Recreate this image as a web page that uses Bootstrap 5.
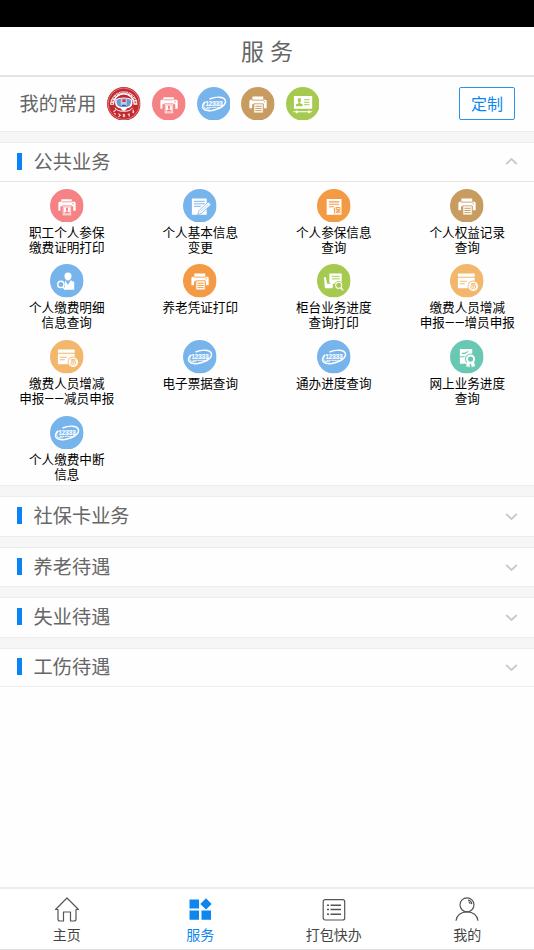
<!DOCTYPE html>
<html lang="zh-CN">
<head>
<meta charset="utf-8">
<meta name="viewport" content="width=device-width, initial-scale=1">
<title>服务</title>
<link href="https://cdn.jsdelivr.net/npm/bootstrap@5.3.0/dist/css/bootstrap.min.css" rel="stylesheet">
<style>
html, body { height: 100%; }
body { font-family: "Noto Sans CJK SC", "Liberation Sans", sans-serif; background: #fefefe; color: #666; overflow: hidden; }
.status-strip { height: 26.5px; background: #000; }
.title-bar { height: 50.5px; border-bottom: 2px solid #e4e4e4; font-size: 23px; line-height: 1; background: #fff; word-spacing: 1px; }
.favourites { height: 54px; padding: 0 19px 1px 19.6px; }
.favourites .caption, .sec-title { font-size: 19.2px; line-height: 1; }
.disc { width: 33.6px; height: 33.6px; display: block; flex: none; }
.fav-icons { gap: 11px; margin-left: 11px; }
.customise { width: 56px; height: 33px; font-size: 16px; line-height: 1; color: #0d86ee; border: 1.3px solid #2b93ee; border-radius: 2px; padding: 0 0 1px; background: #fff; }
.divider { height: 12px; background: #f6f6f6; border-top: 1px solid #ededed; border-bottom: 1px solid #ececec; }
.sec-head { height: 38.5px; padding: 0 16px 1px 17px; }
.sec-head .tick { width: 5px; height: 17px; background: #0a84f5; margin-right: 11.6px; }
.sec-last { border-bottom: 1px solid #efefef; }
.chev { width: 13px; height: 9px; fill: none; stroke: #c9c9c9; stroke-width: 1.8; }
.services { height: 303.8px; margin-top: -.3px; padding-top: 6.6px; border-top: 1px solid #e6e6e6; row-gap: 0; align-content: flex-start; }
.service { height: 75.7px; color: #000; font-size: 12.6px; line-height: 15px; text-align: center; white-space: nowrap; }
.service .disc { margin: 0 auto 1.4px; }
.dash { font-family: Roboto, sans-serif; }
.tabs { height: 63px; border-top: 2px solid #ececec; border-bottom: 1px solid #e0e0e0; background: #fff; font-size: 14px; line-height: 16px; color: #444; }
.tabs a { color: inherit; padding-top: 6px; }
.tabs a.current { color: #0d86ee; }
.tabs svg { width: 28px; height: 28px; margin-bottom: 3px; fill: none; stroke: #555; stroke-width: 1.2; }
</style>
<script src="https://cdn.jsdelivr.net/npm/bootstrap@5.3.0/dist/js/bootstrap.bundle.min.js"></script>
</head>
<body class="d-flex flex-column">
<svg class="d-none">
  <symbol id="i-badge" viewBox="0 0 34 34"><circle cx="17" cy="17" r="17" fill="#f58284"/>
    <path fill="#fff" d="M11.500 10.500h10.500v2.500h3l1 1v8h-2.500v-4.500H10.500V22H8.500v-8l1-1h2z"/>
    <path stroke="#f58284" stroke-width=".8" d="M12 13h10"/><path fill="#f58284" d="M22.500 14.500h1.500v1h-1.500z"/>
    <path fill="#fff" stroke="#f58284" stroke-width=".8" d="M12.500 17h9.200v10h-9.200z"/><path fill="none" stroke="#f58284" stroke-width=".5" d="M13.700 18.300h6.800v7.300h-6.800z"/>
    <path fill="#f58284" d="M16.200 19h2v2.200l-.5 1v.8l2 .6v1.200h-5v-1.200l2-.6v-.8l-.5-1z"/></symbol>
  <symbol id="doc-printer" viewBox="0 0 34 34">
    <path fill="#fff" d="M11.500 9.500h11V13h2.500l1 1v7.500h-3V17.500H11.200v4H8.500V14l1-1h2z"/>
    <path fill="none" stroke="currentColor" stroke-width=".9" d="M11 13.300h12"/><path fill="currentColor" d="M23 14.500h1.300v1H23z"/>
    <path fill="#fff" stroke="currentColor" stroke-width=".9" d="M13 17h9.500v9.300H13z"/><path stroke="currentColor" stroke-width="1" d="M14.500 19.500h6.500M14.500 21.700h6.500M14.500 23.900h6.500"/></symbol>
  <symbol id="i-print-tan" viewBox="0 0 34 34"><circle cx="17" cy="17" r="17" fill="#c89c60"/><use href="#doc-printer" width="34" height="34" color="#c89c60"/></symbol>
  <symbol id="i-print-orange" viewBox="0 0 34 34"><circle cx="17" cy="17" r="17" fill="#f59a44"/><use href="#doc-printer" width="34" height="34" color="#f59a44"/></symbol>
  <symbol id="i-12333" viewBox="0 0 34 34"><circle cx="17" cy="17" r="17" fill="#78b4ec"/>
    <g fill="none" stroke="#fff" transform="rotate(-9 17 17)"><path stroke-width="1.500" d="M8.500 13.500C2.500 18 5 23.300 14 23.300c9 0 16-3.500 15-8.300-.8-4-9-5-15.500-3.500"/><path stroke-width=".8" d="M9.500 13.700c-4.500 3-4 7 3 7.800"/></g>
    <text x="8.500" y="18.900" font-family="Liberation Sans, sans-serif" font-weight="bold" font-size="7.400" fill="#fff" stroke="#fff" stroke-width=".2" textLength="17.500" lengthAdjust="spacingAndGlyphs">12333</text>
    <path stroke="#fff" stroke-width="1" stroke-dasharray="2 .5" d="M10 20.600h13"/></symbol>
  <symbol id="i-card" viewBox="0 0 34 34"><circle cx="17" cy="17" r="17" fill="#a6ca50"/>
    <path fill="#fff" d="M8 9h18.500v13H8zM7.500 24.500h19v1h-19zM10 23.700h1.800v2.800H10zM22.500 23.700h1.800v2.800h-1.800z"/>
    <path fill="#a6ca50" d="M12 11.500h3v3l-.8 1.200v.8l2.600 1v2H10.200v-2l2.600-1v-.8l-.8-1.200zM18.300 12.500h5.500v1h-5.500zM18.300 15h5.500v1h-5.500zM18.300 17.500h5.500v1h-5.500z"/></symbol>
  <symbol id="i-seal" viewBox="0 0 34 34"><circle cx="17" cy="17" r="17" fill="#c4282f"/>
    <circle cx="17" cy="17" r="15.900" fill="none" stroke="#f3d2d2" stroke-width=".5"/>
    <path fill="#fff" d="M3.200 18A13.800 13.800 0 0 1 30.800 18L27 18A10 10 0 0 0 7 18z"/>
    <path fill="none" stroke="#c4282f" stroke-width="2" stroke-dasharray="1 .9 .5 .8" d="M5.200 17A11.800 11.800 0 0 1 28.800 17"/>
    <circle cx="17" cy="16.500" r="8.900" fill="#c4282f"/>
    <path fill="#fff" d="M8.500 13c4-3 13-3 17 0 1 6-1 8-5 8.500L18 24h-2l-2.500-2.500c-4-.5-6-2.500-5-8.500z"/>
    <path fill="#7098d2" d="M9.800 13.200c4-2 10.400-2 14.400 0 .5 4.500-1 6.600-4.500 7.100h-5.400c-3.500-.5-5-2.600-4.500-7.100z"/>
    <path fill="#b9cfee" d="M14 12h6v7h-6z"/><path fill="#df3434" d="M15.600 12.400h3.200v2.800h-3.200z"/><path fill="#34558f" d="M15 18h4v1.200h-4z"/>
    <path fill="none" stroke="#fff" stroke-width="1" d="M8 21c2 3 5 3.600 9 3.500 4 .1 7-.5 9-3.500"/>
    <path fill="none" stroke="#f5dada" stroke-width="1.100" d="m6.500 25 2.500-2M7 26.500l2 1M11.500 27l2 1.500-2 1.700M16 28h2m-1-1v3.500m-1-1h2.500M21 28l2-1m-1 0 .7 3M25.500 25.500l2-1m-1.200-1.500.7 3.500"/></symbol>
  <symbol id="i-edit" viewBox="0 0 34 34"><circle cx="17" cy="17" r="17" fill="#78b4ec"/>
    <path fill="#fff" d="M9 9.500h15v16.500H9z"/><path stroke="#78b4ec" d="M11 12.500h11M11 15h11M11 17.500h7" stroke-width="1"/>
    <path fill="#fff" stroke="#78b4ec" stroke-width=".8" d="m16 22 9.500-8.800 3 2.500-9.500 8.800-4 1.300z"/><path stroke="#78b4ec" stroke-width=".5" d="m17.500 23 8.500-7.500"/></symbol>
  <symbol id="i-insure" viewBox="0 0 34 34"><circle cx="17" cy="17" r="17" fill="#f59a44"/>
    <path fill="#fff" d="M9.800 10h15v16h-15z"/><path stroke="#f59a44" stroke-width="1.100" d="M12 13h10.500M12 15.500h10.500M12 18h5"/>
    <path fill="none" stroke="#f59a44" stroke-width="1" d="M18.500 18.500 17 21m.8-.8V25M19.500 18.700h3.700v2h-3.700zM18.800 22.300h5.200M21.300 21v4m0-2.700L19 24.500m2.300-2.200 2.400 2.200"/></symbol>
  <symbol id="i-person" viewBox="0 0 34 34"><circle cx="17" cy="17" r="17" fill="#78b4ec"/>
    <path fill="#fff" d="M18.200 8.500c2.300 0 3.800 1.500 3.600 3.800-.2 2.300-1.600 4.400-3.600 4.400s-3.400-2.100-3.600-4.400c-.2-2.300 1.300-3.800 3.600-3.800zM15.200 16.500l3 4.500 2.800-4.500 3.500 1.800v7.700H15z"/>
    <circle cx="11" cy="20.700" r="3.200" fill="#78b4ec" stroke="#fff" stroke-width="1.400"/><path stroke="#fff" stroke-width="1.600" d="m13 23.200 2.600 2.700"/></symbol>
  <symbol id="i-desk" viewBox="0 0 34 34"><circle cx="17" cy="17" r="17" fill="#a6ca50"/>
    <path fill="#fff" d="M12.500 9.500H25v10.500H14.500l-2-1zM7 13.500h2l1.200 6.500H16v4.500H8z"/><path stroke="#a6ca50" d="M15 12.500h8M15 15h8"/>
    <circle cx="22" cy="21.500" r="4.400" fill="#a6ca50"/><circle cx="22" cy="21.500" r="3.100" fill="none" stroke="#fff" stroke-width="1.100"/><path stroke="#fff" stroke-width="1.400" d="m24 24 2.600 2.700"/></symbol>
  <symbol id="i-staff" viewBox="0 0 34 34"><circle cx="17" cy="17" r="17" fill="#f3b76c"/>
    <path fill="#fff" d="M8 9.500h17V13H8zM8 14h17v10.500H8z"/><path stroke="#f3b76c" d="M10 17.500h7M10 20h5"/>
    <circle cx="23.500" cy="22.500" r="5.700" fill="#f3b76c"/><circle cx="23.500" cy="22.500" r="4.900" fill="#fff"/>
    <path fill="none" stroke="#f3b76c" stroke-width=".9" d="M21.800 19.700h3.500v1.300h-3.500zM21.300 25v-2.800h4.500v2.300M23.500 22.500v1.500L21.800 26m2-1.500 1.800 1.300"/></symbol>
  <symbol id="i-award" viewBox="0 0 34 34"><circle cx="17" cy="17" r="17" fill="#68c8b2"/>
    <path fill="#fff" d="M10 9h12.500v15H10z"/><path fill="none" stroke="#68c8b2" stroke-width="1.100" d="M12 13.500h3l3.500-2M10 17h5"/>
    <circle cx="20.800" cy="19.300" r="5.600" fill="#68c8b2"/><path fill="#fff" d="m17.300 21-1 6 2-.5 1.200 1.500.8-4h1l.8 4 1.200-1.500 2 .5-1-6z"/>
    <circle cx="20.800" cy="19.300" r="3.600" fill="#68c8b2" stroke="#fff" stroke-width="2"/></symbol>
</svg>

<div class="status-strip flex-shrink-0"></div>
<header class="title-bar flex-shrink-0 d-flex align-items-center justify-content-center">服 务</header>

<section class="favourites flex-shrink-0 d-flex align-items-center">
  <span class="caption">我的常用</span>
  <div class="fav-icons d-flex">
    <svg class="disc"><use href="#i-seal"/></svg>
    <svg class="disc"><use href="#i-badge"/></svg>
    <svg class="disc"><use href="#i-12333"/></svg>
    <svg class="disc"><use href="#i-print-tan"/></svg>
    <svg class="disc"><use href="#i-card"/></svg>
  </div>
  <button type="button" class="btn customise ms-auto">定制</button>
</section>

<main class="flex-grow-1">
  <div class="divider"></div>
  <div class="sec-head d-flex align-items-center"><span class="tick"></span><span class="sec-title">公共业务</span><svg class="chev ms-auto" viewBox="0 0 13 9"><path d="m1.200 7 5.300-5 5.300 5"/></svg></div>
  <div class="services row g-0">
    <div class="service col-3"><svg class="disc"><use href="#i-badge"/></svg>职工个人参保<br>缴费证明打印</div>
    <div class="service col-3"><svg class="disc"><use href="#i-edit"/></svg>个人基本信息<br>变更</div>
    <div class="service col-3"><svg class="disc"><use href="#i-insure"/></svg>个人参保信息<br>查询</div>
    <div class="service col-3"><svg class="disc"><use href="#i-print-tan"/></svg>个人权益记录<br>查询</div>
    <div class="service col-3"><svg class="disc"><use href="#i-person"/></svg>个人缴费明细<br>信息查询</div>
    <div class="service col-3"><svg class="disc"><use href="#i-print-orange"/></svg>养老凭证打印</div>
    <div class="service col-3"><svg class="disc"><use href="#i-desk"/></svg>柜台业务进度<br>查询打印</div>
    <div class="service col-3"><svg class="disc"><use href="#i-staff"/></svg>缴费人员增减<br>申报<span class="dash">——</span>增员申报</div>
    <div class="service col-3"><svg class="disc"><use href="#i-staff"/></svg>缴费人员增减<br>申报<span class="dash">——</span>减员申报</div>
    <div class="service col-3"><svg class="disc"><use href="#i-12333"/></svg>电子票据查询</div>
    <div class="service col-3"><svg class="disc"><use href="#i-12333"/></svg>通办进度查询</div>
    <div class="service col-3"><svg class="disc"><use href="#i-award"/></svg>网上业务进度<br>查询</div>
    <div class="service col-3"><svg class="disc"><use href="#i-12333"/></svg>个人缴费中断<br>信息</div>
  </div>
  <div class="divider"></div>
  <div class="sec-head d-flex align-items-center"><span class="tick"></span><span class="sec-title">社保卡业务</span><svg class="chev ms-auto" viewBox="0 0 13 9"><path d="m1.200 3 5.300 5 5.300-5"/></svg></div>
  <div class="divider"></div>
  <div class="sec-head d-flex align-items-center"><span class="tick"></span><span class="sec-title">养老待遇</span><svg class="chev ms-auto" viewBox="0 0 13 9"><path d="m1.200 3 5.300 5 5.300-5"/></svg></div>
  <div class="divider"></div>
  <div class="sec-head d-flex align-items-center"><span class="tick"></span><span class="sec-title">失业待遇</span><svg class="chev ms-auto" viewBox="0 0 13 9"><path d="m1.200 3 5.300 5 5.300-5"/></svg></div>
  <div class="divider"></div>
  <div class="sec-head sec-last d-flex align-items-center"><span class="tick"></span><span class="sec-title">工伤待遇</span><svg class="chev ms-auto" viewBox="0 0 13 9"><path d="m1.200 3 5.300 5 5.300-5"/></svg></div>
</main>

<nav class="tabs flex-shrink-0 row g-0">
  <a href="#" class="col-3 d-flex flex-column align-items-center text-decoration-none"><svg viewBox="0 0 28 28"><path stroke-linejoin="round" d="M2.500 14.500 14 3l11.500 11.500H23V24q0 2-2 2h-3.500v-9h-7v9H7q-2 0-2-2v-9.500z"/></svg>主页</a>
  <a href="#" class="col-3 d-flex flex-column align-items-center text-decoration-none current"><svg viewBox="0 0 28 28"><path fill="#0d86ee" stroke="none" d="M3.500 4.500h9.500v9H3.500zM3.500 15.500h9.500v9.300H3.500zM15.500 15.500h9.500v9.300h-9.500zM20 3.200l5.700 5.700-5.700 5.700-5.700-5.700z"/></svg>服务</a>
  <a href="#" class="col-3 d-flex flex-column align-items-center text-decoration-none"><svg viewBox="0 0 28 28"><rect x="3.200" y="4.700" width="21.500" height="20.300" rx="2"/><path stroke-width="1.400" d="M7 10.200h2m1.500 0H21M7 14.500h2m1.500 0H21M7 19.200h2m1.500 0H21"/></svg>打包快办</a>
  <a href="#" class="col-3 d-flex flex-column align-items-center text-decoration-none"><svg viewBox="0 0 28 28"><circle cx="14" cy="9.800" r="7"/><path d="M3 25.800c.5-5.500 5-9 11-9s10.500 3.500 11 9M15 5.100c2.200.3 3.600 1.800 3.700 4M15.500 6.800c1 .3 1.500.9 1.700 2" /></svg>我的</a>
</nav>
</body>
</html>
